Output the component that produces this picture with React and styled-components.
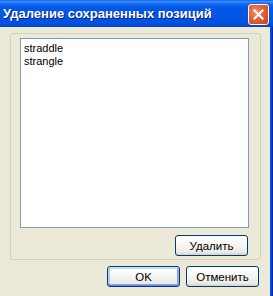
import React from 'react'
import styled, { createGlobalStyle } from 'styled-components';

const Global = createGlobalStyle`
    html, body {
        margin: 0;
        padding: 0;
        background: #ECE9D8;
    }
    * { box-sizing: border-box; }
`

const Window = styled.div`
    width: 273px;
    height: 296px;
    display: flex;
    flex-direction: column;
    font-family: "Liberation Sans", Arial, sans-serif;
    font-size: 11px;
    overflow: hidden;
`
const TitleBar = styled.div`
    height: 27px;
    flex: none;
    display: flex;
    align-items: center;
    justify-content: space-between;
    padding: 0 4px 1px 3px;
    background: linear-gradient(to bottom,
        #0A62EE 0%, #3A8DFA 6%, #1468F0 14%, #0058E8 30%,
        #0055E5 60%, #0053E0 85%, #0046CC 100%);
`
const Title = styled.span`
    color: #fff;
    font-weight: bold;
    font-size: 13px;
    text-shadow: 1px 1px 0 #0A1E8C;
    white-space: nowrap;
`
const CloseButton = styled.div`
    width: 21px;
    height: 21px;
    margin-top: 2px;
    border: 1px solid #fff;
    border-radius: 3px;
    background: radial-gradient(circle at 35% 35%, #F08A68 0%, #E2582F 55%, #C9401D 100%);
    display: flex;
    align-items: center;
    justify-content: center;
`
const Body = styled.div`
    flex: 1;
    display: flex;
`
const Content = styled.div`
    flex: 1;
    background: #ECE9D8;
    padding: 6px 9px 0 10px;
    display: flex;
    flex-direction: column;
`
const RightFrame = styled.div`
    width: 3px;
    flex: none;
    background: linear-gradient(to right, #0050E0, #0047D4 60%, #00138C);
`
const GroupBox = styled.div`
    height: 227px;
    border: 1px solid #D0D0BF;
    border-radius: 3px;
    padding: 4px 11px 0 9px;
    display: flex;
    flex-direction: column;
`
const ListBox = styled.div`
    height: 190px;
    background: #fff;
    border: 1px solid #7F9DB9;
    padding: 3px 3px;
    line-height: 13px;
    color: #000;
`
const GroupActions = styled.div`
    display: flex;
    justify-content: flex-end;
    padding: 7px 1px 0 0;
`
const DialogActions = styled.div`
    display: flex;
    justify-content: flex-end;
    gap: 6px;
    padding: 6px 2px 0 0;
`
const Button = styled.div`
    width: 73px;
    height: 21px;
    border: 1px solid #003C74;
    border-radius: 3px;
    background: linear-gradient(to bottom, #FFFFFF 0%, #F7F7F4 40%, #ECEBE6 85%, #D6D0C5 100%);
    display: flex;
    align-items: center;
    justify-content: center;
    color: #000;
    font-size: 11.5px;
    box-shadow: ${p => p.$default
        ? 'inset 0 1px 0 #CEE7FF, inset 0 -1px 0 #6982EE, inset 1px 0 0 #B7D1FB, inset -1px 0 0 #8FA9F4, inset 0 2px 0 #BCD4F6, inset 0 -2px 0 #8EA4EA, inset 2px 0 0 #A8C4F6, inset -2px 0 0 #8EA4EA'
        : 'none'};
`

const App = () => {
    return (
        <Window>
            <Global />
            <TitleBar>
                <Title>Удаление сохраненных позиций</Title>
                <CloseButton>
                    <svg width="11" height="11" viewBox="0 0 11 11">
                        <path d="M1.5 1.5 L9.5 9.5 M9.5 1.5 L1.5 9.5" stroke="#fff" strokeWidth="2.2" strokeLinecap="square" />
                    </svg>
                </CloseButton>
            </TitleBar>
            <Body>
                <Content>
                    <GroupBox>
                        <ListBox>
                            <div>straddle</div>
                            <div>strangle</div>
                        </ListBox>
                        <GroupActions>
                            <Button>Удалить</Button>
                        </GroupActions>
                    </GroupBox>
                    <DialogActions>
                        <Button $default>OK</Button>
                        <Button>Отменить</Button>
                    </DialogActions>
                </Content>
                <RightFrame />
            </Body>
        </Window>
    )
}

export default App
